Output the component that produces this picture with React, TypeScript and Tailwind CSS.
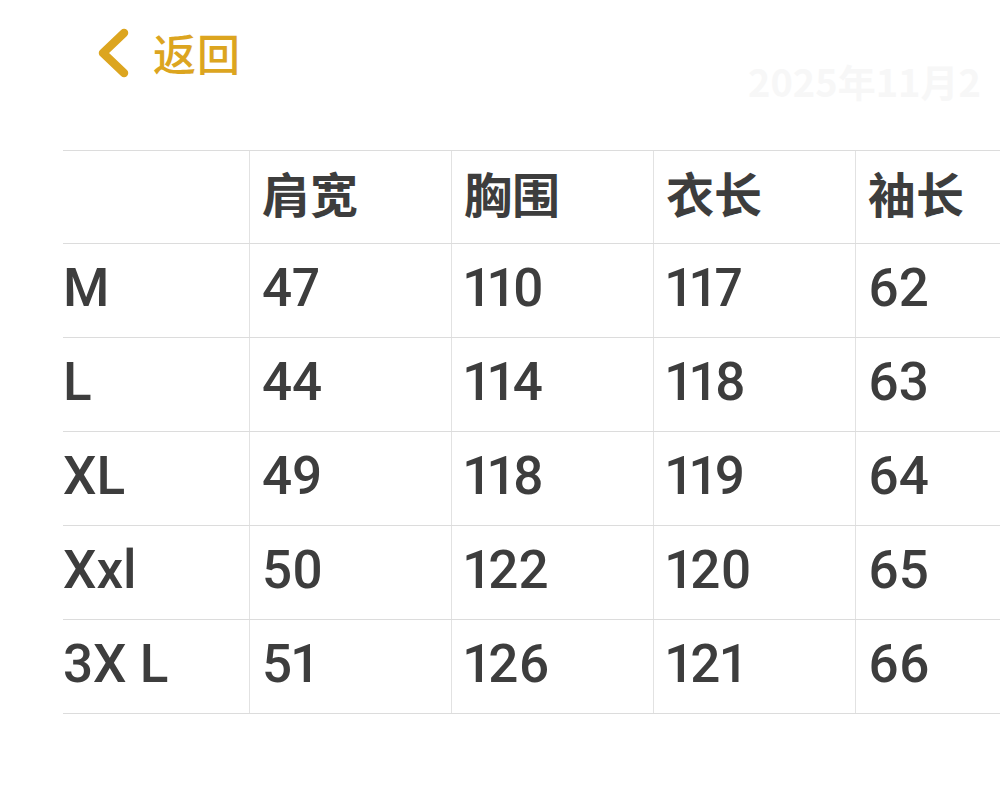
import React from "react";

const headers = ["", "肩宽", "胸围", "衣长", "袖长"];
const rows: string[][] = [
  ["M", "47", "110", "117", "62"],
  ["L", "44", "114", "118", "63"],
  ["XL", "49", "118", "119", "64"],
  ["Xxl", "50", "122", "120", "65"],
  ["3X L", "51", "126", "121", "66"],
];

const colW = ["w-[187px]", "w-[202px]", "w-[202px]", "w-[202px]", "w-[202px]"];

export default function App() {
  return (
    <div className="relative w-[1000px] h-[787px] overflow-hidden bg-white" style={{ fontFamily: 'Roboto, "Noto Sans CJK SC", sans-serif' }}>
      <div className="flex items-center h-[104px] pl-[94px] gap-[23px]">
        <svg width="36" height="52" viewBox="0 0 36 52" className="mt-[1px]">
          <path d="M30 6 L9 26 L30 46" fill="none" stroke="#DCA51F" strokeWidth="8.5" strokeLinecap="round" strokeLinejoin="round" />
        </svg>
        <span className="text-[43px] leading-none font-medium text-[#DCA51F] font-['Noto_Sans_CJK_SC',sans-serif] tracking-[1px]">返回</span>
      </div>
      <div className="absolute left-[748px] top-[52px] text-[38px] font-bold text-[#f7f7f7] whitespace-nowrap font-['Noto_Sans_CJK_SC',sans-serif]">2025年11月2</div>
      <div className="ml-[63px] mt-[46px] w-[1100px] border-t border-[#dcdcdc]">
        <div className="flex h-[93px] border-b border-[#dcdcdc]">
          {headers.map((h, i) => (
            <div key={i} className={`${colW[i]} shrink-0 flex items-center ${i === 0 ? "" : "pl-[12px]"} ${i < 4 ? "border-r border-[#e2e2e2]" : ""}`}>
              <span className="text-[48px] font-bold text-[#3d3d3d] leading-none mb-[10px] font-['Noto_Sans_CJK_SC',sans-serif]">{h}</span>
            </div>
          ))}
        </div>
        {rows.map((r, ri) => (
          <div key={ri} className="flex h-[94px] border-b border-[#dcdcdc]">
            {r.map((c, i) => (
              <div key={i} className={`${colW[i]} shrink-0 flex items-center ${i === 0 ? "" : "pl-[12px]"} ${i < 4 ? "border-r border-[#e2e2e2]" : ""}`}>
                <span className="text-[53px] font-medium text-[#3d3d3d] leading-none mb-[4px] proportional-nums">{c}</span>
              </div>
            ))}
          </div>
        ))}
      </div>
    </div>
  );
}
